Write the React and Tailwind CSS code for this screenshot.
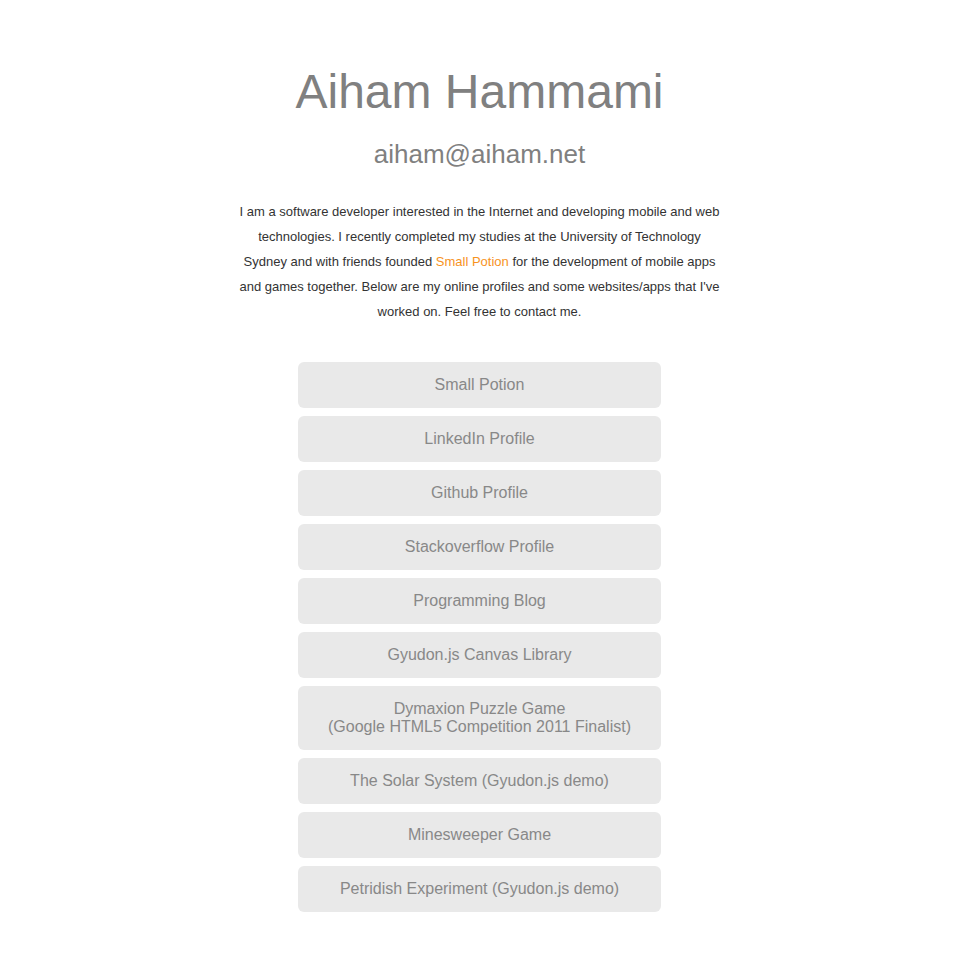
import React from "react";

const links = [
  ["Small Potion"],
  ["LinkedIn Profile"],
  ["Github Profile"],
  ["Stackoverflow Profile"],
  ["Programming Blog"],
  ["Gyudon.js Canvas Library"],
  ["Dymaxion Puzzle Game", "(Google HTML5 Competition 2011 Finalist)"],
  ["The Solar System (Gyudon.js demo)"],
  ["Minesweeper Game"],
  ["Petridish Experiment (Gyudon.js demo)"],
];

export default function App() {
  return (
    <div className="min-h-screen bg-white font-['Liberation_Sans',Arial,sans-serif] flex flex-col items-center pt-[64px] pb-12 pr-[2px]">
      <h1 className="text-[48px] leading-[56px] text-[#808080]">Aiham Hammami</h1>
      <h2 className="mt-[19px] text-[26px] leading-[30px] text-[#808080]">aiham@aiham.net</h2>

      <p className="mt-[30px] w-[487px] text-center text-[13px] leading-[25px] text-[#333]">
        I am a software developer interested in the Internet and developing mobile and web
        technologies. I recently completed my studies at the University of Technology Sydney
        and with friends founded <a className="text-[#f7931e]">Small Potion</a> for the
        development of mobile apps and games together. Below are my online profiles and some
        websites/apps that I've worked on. Feel free to contact me.
      </p>

      <div className="mt-[38px] flex flex-col gap-2">
        {links.map((lines) => (
          <a
            key={lines[0]}
            className="w-[363px] rounded-md bg-[#e9e9e9] py-[14px] text-center text-[16px] leading-[18px] text-[#888]"
          >
            {lines.map((l) => (
              <div key={l}>{l}</div>
            ))}
          </a>
        ))}
      </div>
    </div>
  );
}
